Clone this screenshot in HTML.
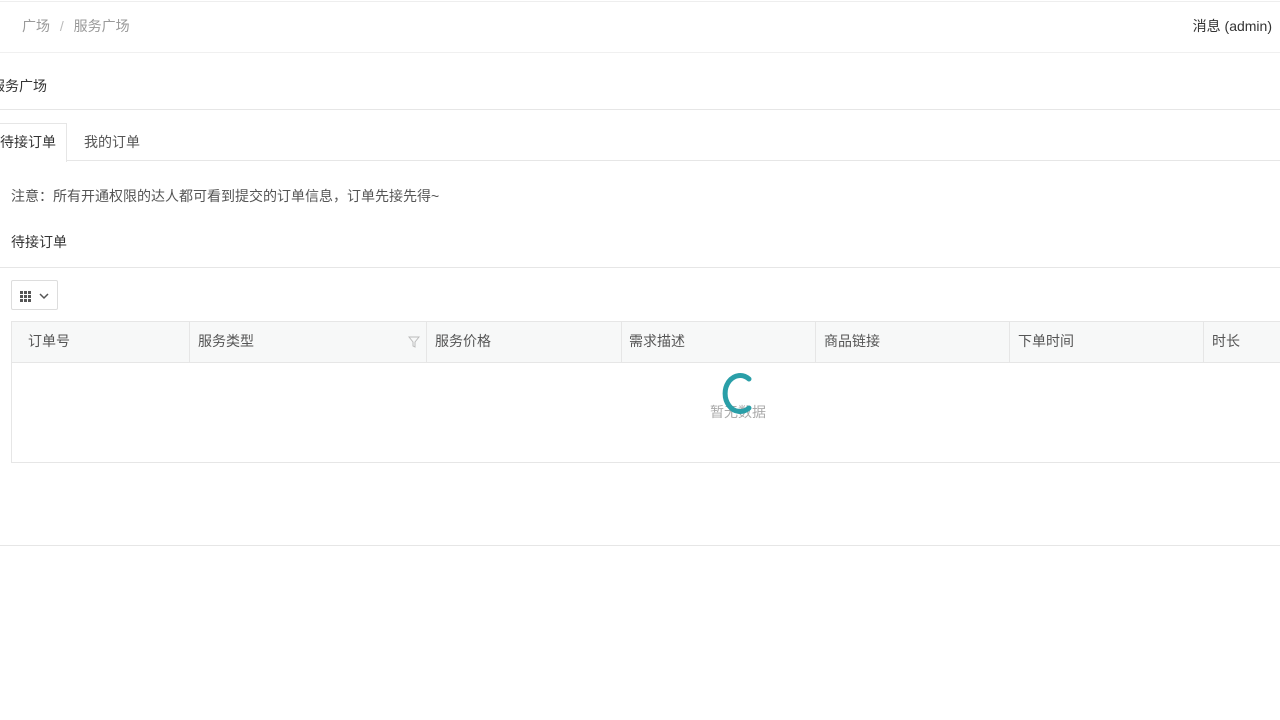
<!DOCTYPE html>
<html><head><meta charset="utf-8"><style>
*{box-sizing:border-box;margin:0;padding:0}
body{width:1280px;height:720px;background:#fff;font-family:"Liberation Sans","Noto Sans CJK SC",sans-serif;font-size:14px;color:#555;position:relative;overflow:hidden}
.abs{position:absolute;white-space:nowrap}
.hl{position:absolute;left:0;width:1280px;height:1px;background:#e6e6e6}
.th{position:absolute;top:322px;height:41px;line-height:38px;padding-left:16px;border-right:1px solid #e6e6e6;color:#555}
</style></head><body>
<div class="hl" style="top:1px;background:#eee"></div>
<div class="abs" style="left:22px;top:16px;color:#999">广场 <span style="margin:0 6px;color:#bbb">/</span> 服务广场</div>
<div class="abs" style="right:8px;top:16px;color:#333">消息 (admin)</div>
<div class="hl" style="top:52px;background:#f0f0f0"></div>
<div class="abs" style="left:-9px;top:76px;color:#333">服务广场</div>
<div class="hl" style="top:109px"></div>
<div style="position:absolute;left:-1px;top:123px;width:68px;height:39px;border:1px solid #e6e6e6;border-bottom:none;background:#fff;z-index:2"></div>
<div class="abs" style="left:0;top:132px;color:#333;z-index:3">待接订单</div>
<div class="abs" style="left:84px;top:132px;color:#555">我的订单</div>
<div class="hl" style="top:160px"></div>
<div class="abs" style="left:11px;top:186px;color:#555;font-size:14px">注意：所有开通权限的达人都可看到提交的订单信息，订单先接先得~</div>
<div class="abs" style="left:11px;top:232px;color:#333">待接订单</div>
<div class="hl" style="top:267px"></div>
<div style="position:absolute;left:11px;top:280px;width:47px;height:30px;border:1px solid #ddd;border-radius:2px">
<svg width="47" height="30" style="position:absolute;left:-1px;top:-1px"><g fill="#555"><rect x="9" y="11" width="3" height="3"/><rect x="13" y="11" width="3" height="3"/><rect x="17" y="11" width="3" height="3"/><rect x="9" y="15" width="3" height="3"/><rect x="13" y="15" width="3" height="3"/><rect x="17" y="15" width="3" height="3"/><rect x="9" y="19" width="3" height="3"/><rect x="13" y="19" width="3" height="3"/><rect x="17" y="19" width="3" height="3"/></g><path d="M29 14l4 4 4-4" stroke="#555" stroke-width="1.5" fill="none"/></svg></div>
<div style="position:absolute;left:11px;top:321px;width:1280px;height:142px;border:1px solid #e6e6e6"></div>
<div style="position:absolute;left:12px;top:322px;width:1280px;height:41px;background:#f7f8f8;border-bottom:1px solid #e6e6e6"></div>
<div class="th" style="left:12px;width:178px">订单号</div>
<div class="th" style="left:190px;width:237px;padding-left:8px">服务类型<svg width="12" height="12" style="position:absolute;right:6px;top:14px"><path d="M1 1h10L7 6v5L5 10V6z" fill="none" stroke="#bbb"/></svg></div>
<div class="th" style="left:427px;width:195px;padding-left:8px">服务价格</div>
<div class="th" style="left:622px;width:194px;padding-left:7px">需求描述</div>
<div class="th" style="left:816px;width:194px;padding-left:8px">商品链接</div>
<div class="th" style="left:1010px;width:194px;padding-left:8px">下单时间</div>
<div class="th" style="left:1204px;width:80px;padding-left:8px;border:none">时长</div>
<div class="abs" style="left:710px;top:402px;color:#aaa">暂无数据</div>
<svg width="1280" height="720" style="position:absolute;left:0;top:0"><path d="M749 379 A15 18 0 1 0 749 408" fill="none" stroke="#2a9fa8" stroke-width="5" stroke-linecap="round"/></svg>
<div class="hl" style="top:545px"></div>
</body></html>
